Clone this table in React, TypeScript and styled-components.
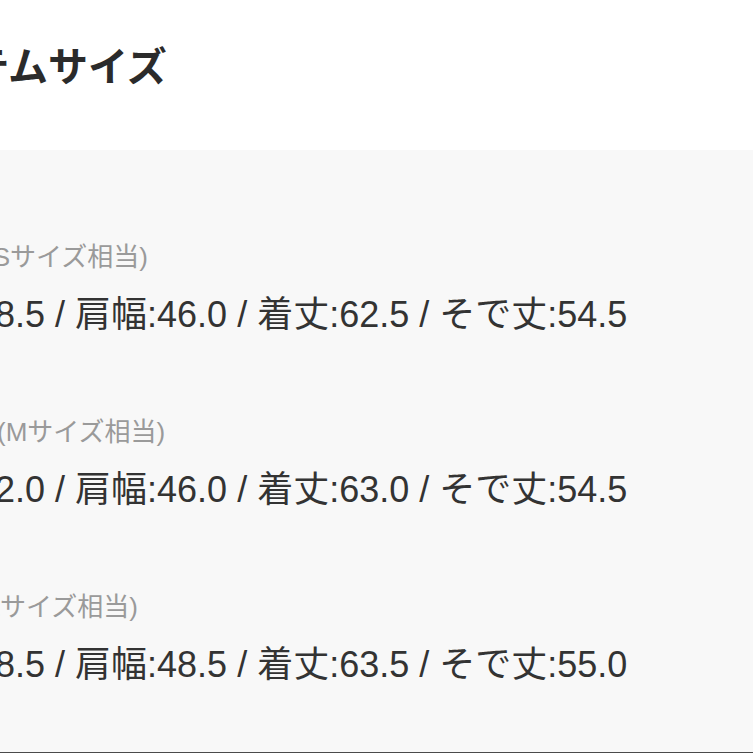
import React from "react";
import styled, { createGlobalStyle } from "styled-components";

const GlobalStyle = createGlobalStyle`
  html, body {
    margin: 0;
    padding: 0;
    background: #ffffff;
  }
  body {
    font-family: "Liberation Sans", "Noto Sans CJK JP", sans-serif;
    color: #333333;
  }
`;

const Page = styled.div`
  width: 753px;
  height: 753px;
  overflow: hidden;
  display: flex;
  flex-direction: column;
  background: #ffffff;
`;

const Header = styled.header`
  height: 150px;
  flex-shrink: 0;
  display: flex;
  align-items: flex-start;
  padding-top: 43px;
  box-sizing: border-box;
`;

const Title = styled.h2`
  margin: 0 0 0 -108px;
  font-size: 40px;
  font-weight: 700;
  line-height: 48px;
  white-space: nowrap;
  color: #2b2b2b;
`;

const Panel = styled.section`
  flex: 1;
  background: #f8f8f8;
  border-bottom: 1px solid #4a4a4a;
  display: flex;
  flex-direction: column;
  gap: 80px;
  padding-top: 92px;
`;

const Item = styled.div`
  display: flex;
  flex-direction: column;
  gap: 21px;
`;

const Note = styled.div<{ $shift: number }>`
  margin-left: ${(p) => p.$shift}px;
  font-size: 26px;
  line-height: 30px;
  color: #9a9a9a;
  white-space: nowrap;
`;

const Sizes = styled.div`
  margin-left: -107px;
  font-size: 36px;
  line-height: 44px;
  color: #333333;
  white-space: nowrap;
`;

const rows = [
  { note: "(Sサイズ相当)", shift: -16, sizes: "身幅:48.5 / 肩幅:46.0 / 着丈:62.5 / そで丈:54.5" },
  { note: "(Mサイズ相当)", shift: -3, sizes: "身幅:52.0 / 肩幅:46.0 / 着丈:63.0 / そで丈:54.5" },
  { note: "(Lサイズ相当)", shift: -23, sizes: "身幅:58.5 / 肩幅:48.5 / 着丈:63.5 / そで丈:55.0" },
];

export default function App() {
  return (
    <Page>
      <GlobalStyle />
      <Header>
        <Title>アイテムサイズ</Title>
      </Header>
      <Panel>
        {rows.map((r) => (
          <Item key={r.note}>
            <Note $shift={r.shift}>{r.note}</Note>
            <Sizes>{r.sizes}</Sizes>
          </Item>
        ))}
      </Panel>
    </Page>
  );
}
